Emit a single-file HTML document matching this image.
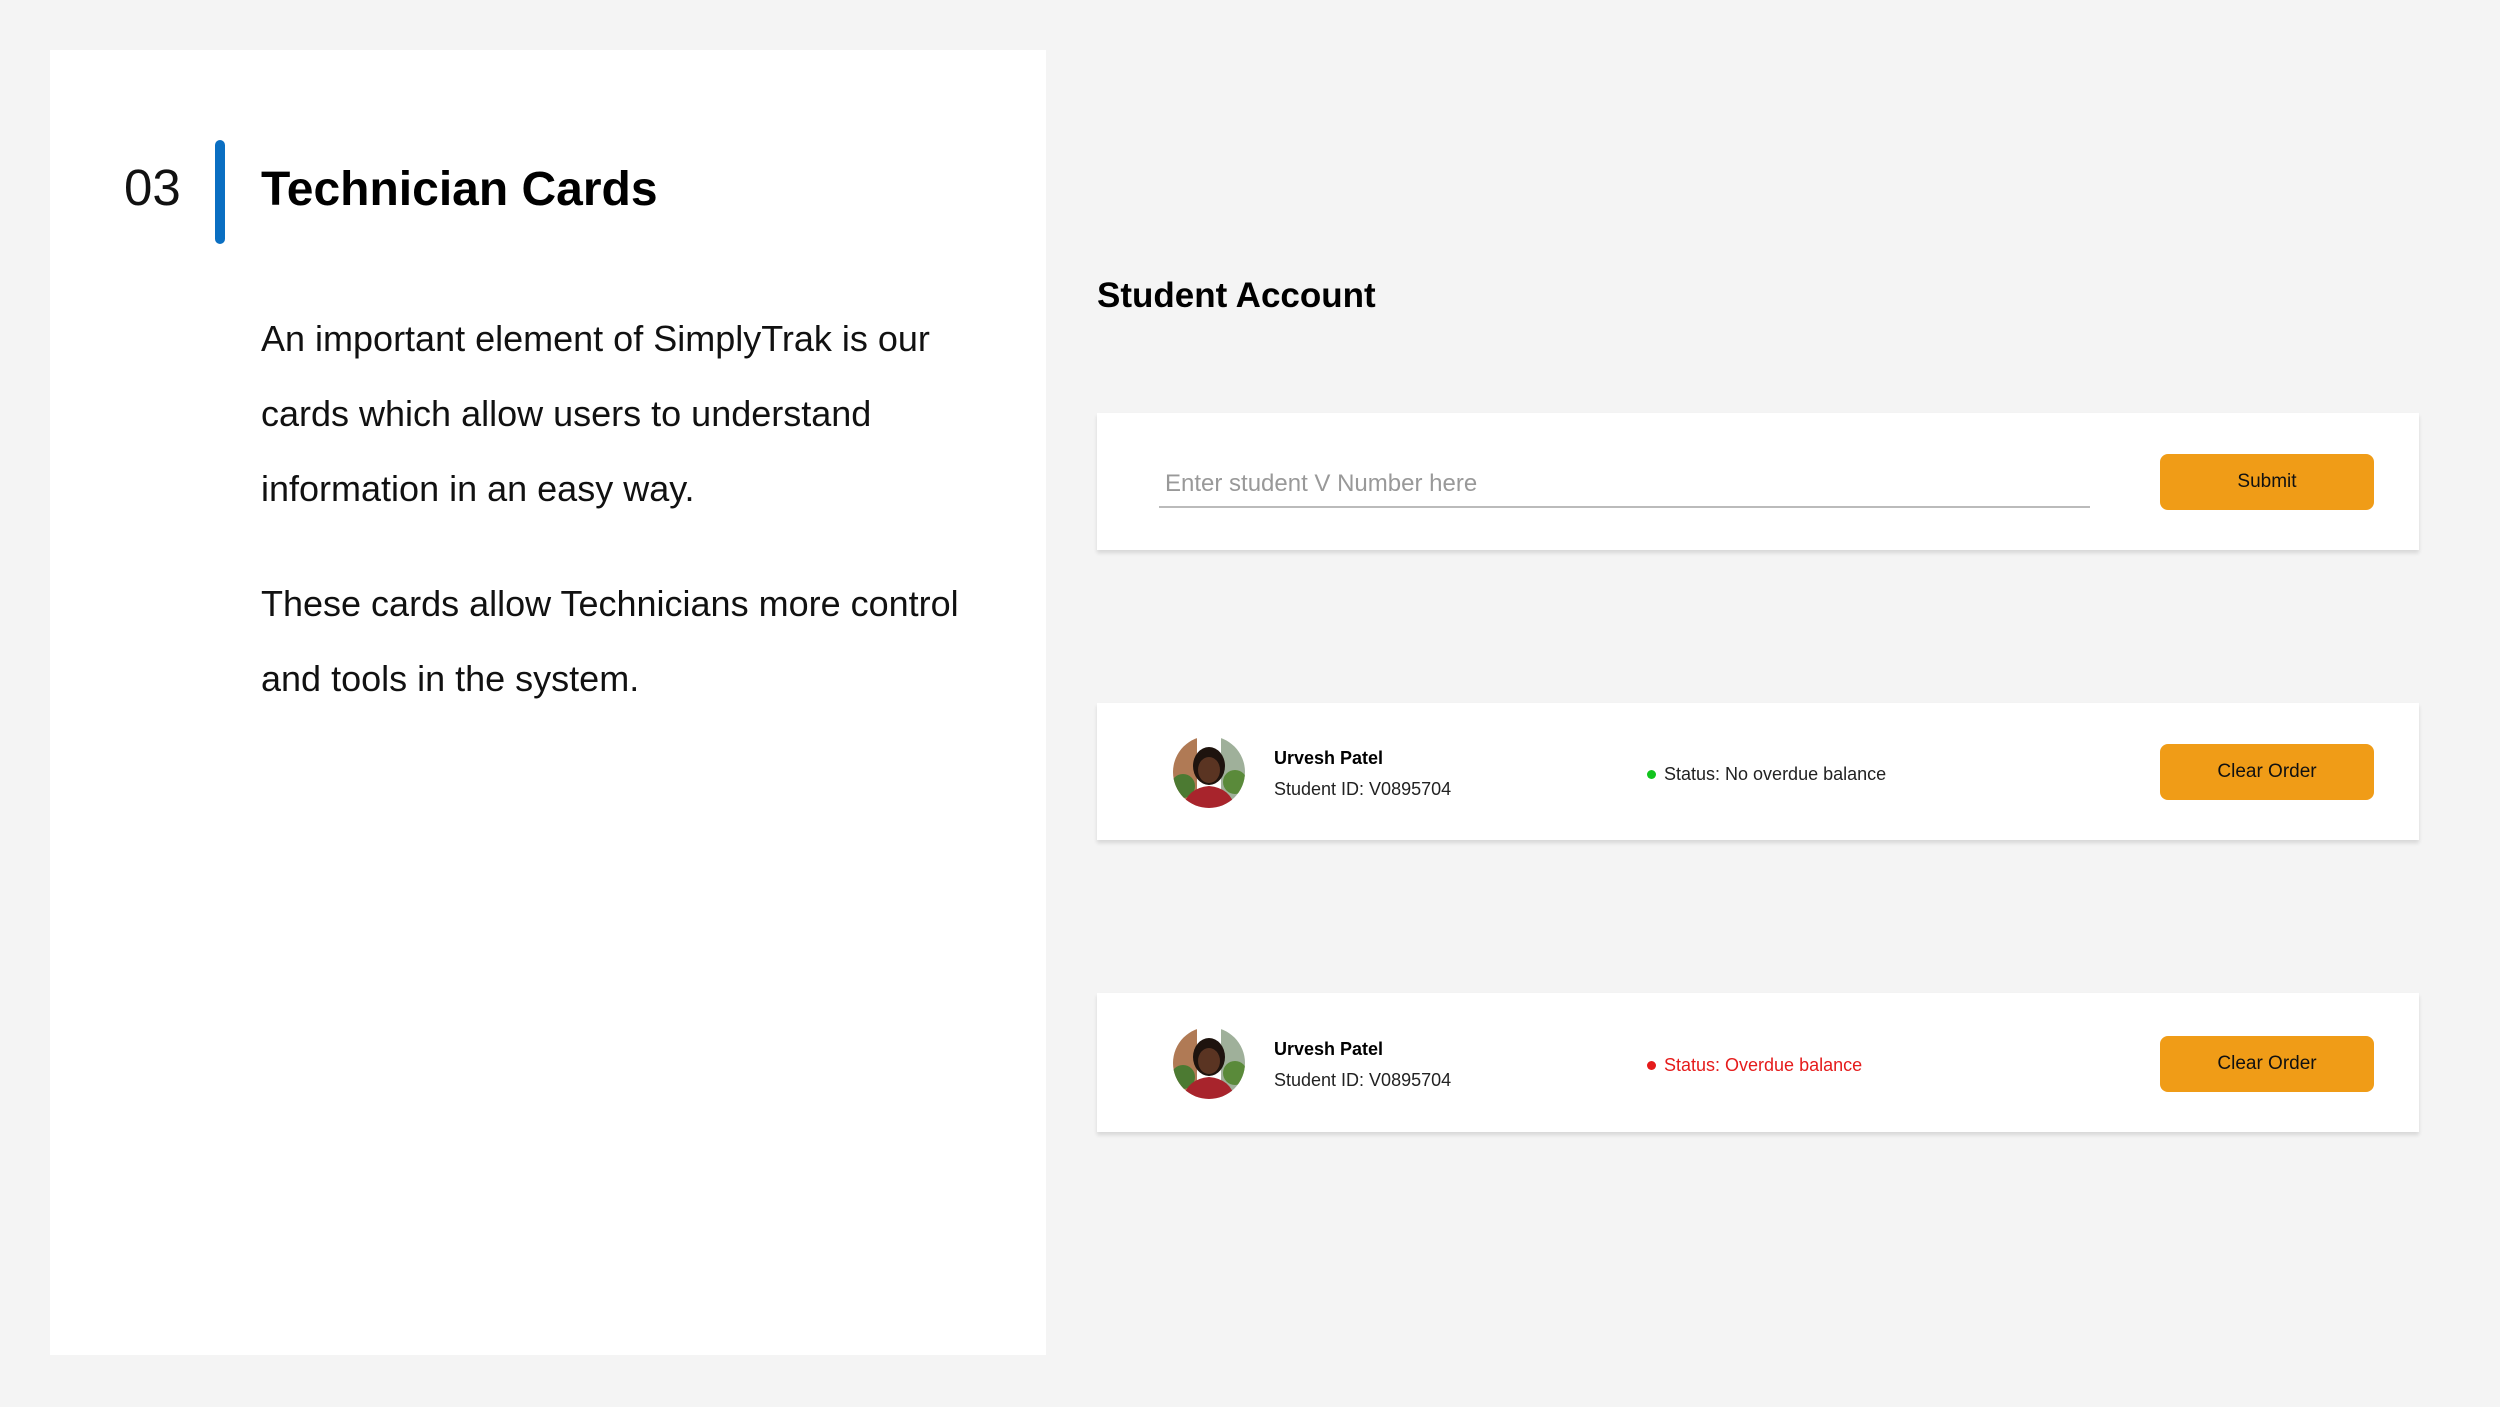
<!DOCTYPE html>
<html><head><style>
*{margin:0;padding:0;box-sizing:border-box}
body{width:2500px;height:1407px;background:#f4f4f4;position:relative;overflow:hidden;font-family:"Liberation Sans",sans-serif;color:#000}
.a{position:absolute}
.panel{left:50px;top:50px;width:996px;height:1305px;background:#fff}
.p{font-size:36px;line-height:75px;color:#111;left:261px;white-space:nowrap}
.card{left:1097px;width:1322px;background:#fff;box-shadow:0 3px 4px rgba(0,0,0,0.12)}
.btn{background:#f09c17;border-radius:8px;font-size:19px;display:flex;align-items:center;justify-content:center;color:#111}
.av{width:72px;height:72px;border-radius:50%;overflow:hidden}
.nm{font-size:18px;font-weight:bold}
.id{font-size:18px;color:#222}
.st{font-size:18px;white-space:nowrap}
.dot{width:9px;height:9px;border-radius:50%;display:inline-block;margin-right:8px;vertical-align:1px}
</style></head><body>
<div class="a panel"></div>
<div class="a" style="left:124px;top:158px;font-size:51px;line-height:60px;color:#111">03</div>
<div class="a" style="left:215px;top:140px;width:10px;height:104px;background:#0a6fc2;border-radius:5px"></div>
<div class="a" style="left:261px;top:158px;font-size:48px;line-height:64px;font-weight:bold">Technician Cards</div>
<div class="a p" style="top:301px">An important element of SimplyTrak is our<br>cards which allow users to understand<br>information in an easy way.</div>
<div class="a p" style="top:566px">These cards allow Technicians more control<br>and tools in the system.</div>

<div class="a" style="left:1097px;top:274px;font-size:35px;font-weight:bold;line-height:44px">Student Account</div>

<div class="a card" style="top:413px;height:137px"></div>
<div class="a" style="left:1165px;top:469px;font-size:24px;color:#999;line-height:30px">Enter student V Number here</div>
<div class="a" style="left:1159px;top:506px;width:931px;height:2px;background:#bbb"></div>
<div class="a btn" style="left:2160px;top:454px;width:214px;height:56px">Submit</div>

<div class="a card" style="top:703px;height:137px"></div>
<div class="a av" style="left:1173px;top:736px"><svg width="72" height="72"><rect x="0" y="0" width="24" height="72" fill="#b07a55"/><rect x="48" y="0" width="24" height="72" fill="#9fb09a"/><circle cx="10" cy="50" r="12" fill="#4c7a32"/><circle cx="62" cy="46" r="12" fill="#5a8a3a"/><ellipse cx="36" cy="30" rx="16" ry="19" fill="#1e130e"/><ellipse cx="36" cy="34" rx="11" ry="13" fill="#5a3422"/><path d="M10 72 Q14 52 36 50 Q58 52 62 72Z" fill="#a8242c"/></svg></div>
<div class="a nm" style="left:1274px;top:748px">Urvesh Patel</div>
<div class="a id" style="left:1274px;top:779px">Student ID: V0895704</div>
<div class="a st" style="left:1647px;top:764px;color:#222"><span class="dot" style="background:#12c41e"></span>Status: No overdue balance</div>
<div class="a btn" style="left:2160px;top:744px;width:214px;height:56px">Clear Order</div>

<div class="a card" style="top:993px;height:139px"></div>
<div class="a av" style="left:1173px;top:1027px"><svg width="72" height="72"><rect x="0" y="0" width="24" height="72" fill="#b07a55"/><rect x="48" y="0" width="24" height="72" fill="#9fb09a"/><circle cx="10" cy="50" r="12" fill="#4c7a32"/><circle cx="62" cy="46" r="12" fill="#5a8a3a"/><ellipse cx="36" cy="30" rx="16" ry="19" fill="#1e130e"/><ellipse cx="36" cy="34" rx="11" ry="13" fill="#5a3422"/><path d="M10 72 Q14 52 36 50 Q58 52 62 72Z" fill="#a8242c"/></svg></div>
<div class="a nm" style="left:1274px;top:1039px">Urvesh Patel</div>
<div class="a id" style="left:1274px;top:1070px">Student ID: V0895704</div>
<div class="a st" style="left:1647px;top:1055px;color:#e51b1b"><span class="dot" style="background:#e51b1b"></span>Status: Overdue balance</div>
<div class="a btn" style="left:2160px;top:1036px;width:214px;height:56px">Clear Order</div>
</body></html>
